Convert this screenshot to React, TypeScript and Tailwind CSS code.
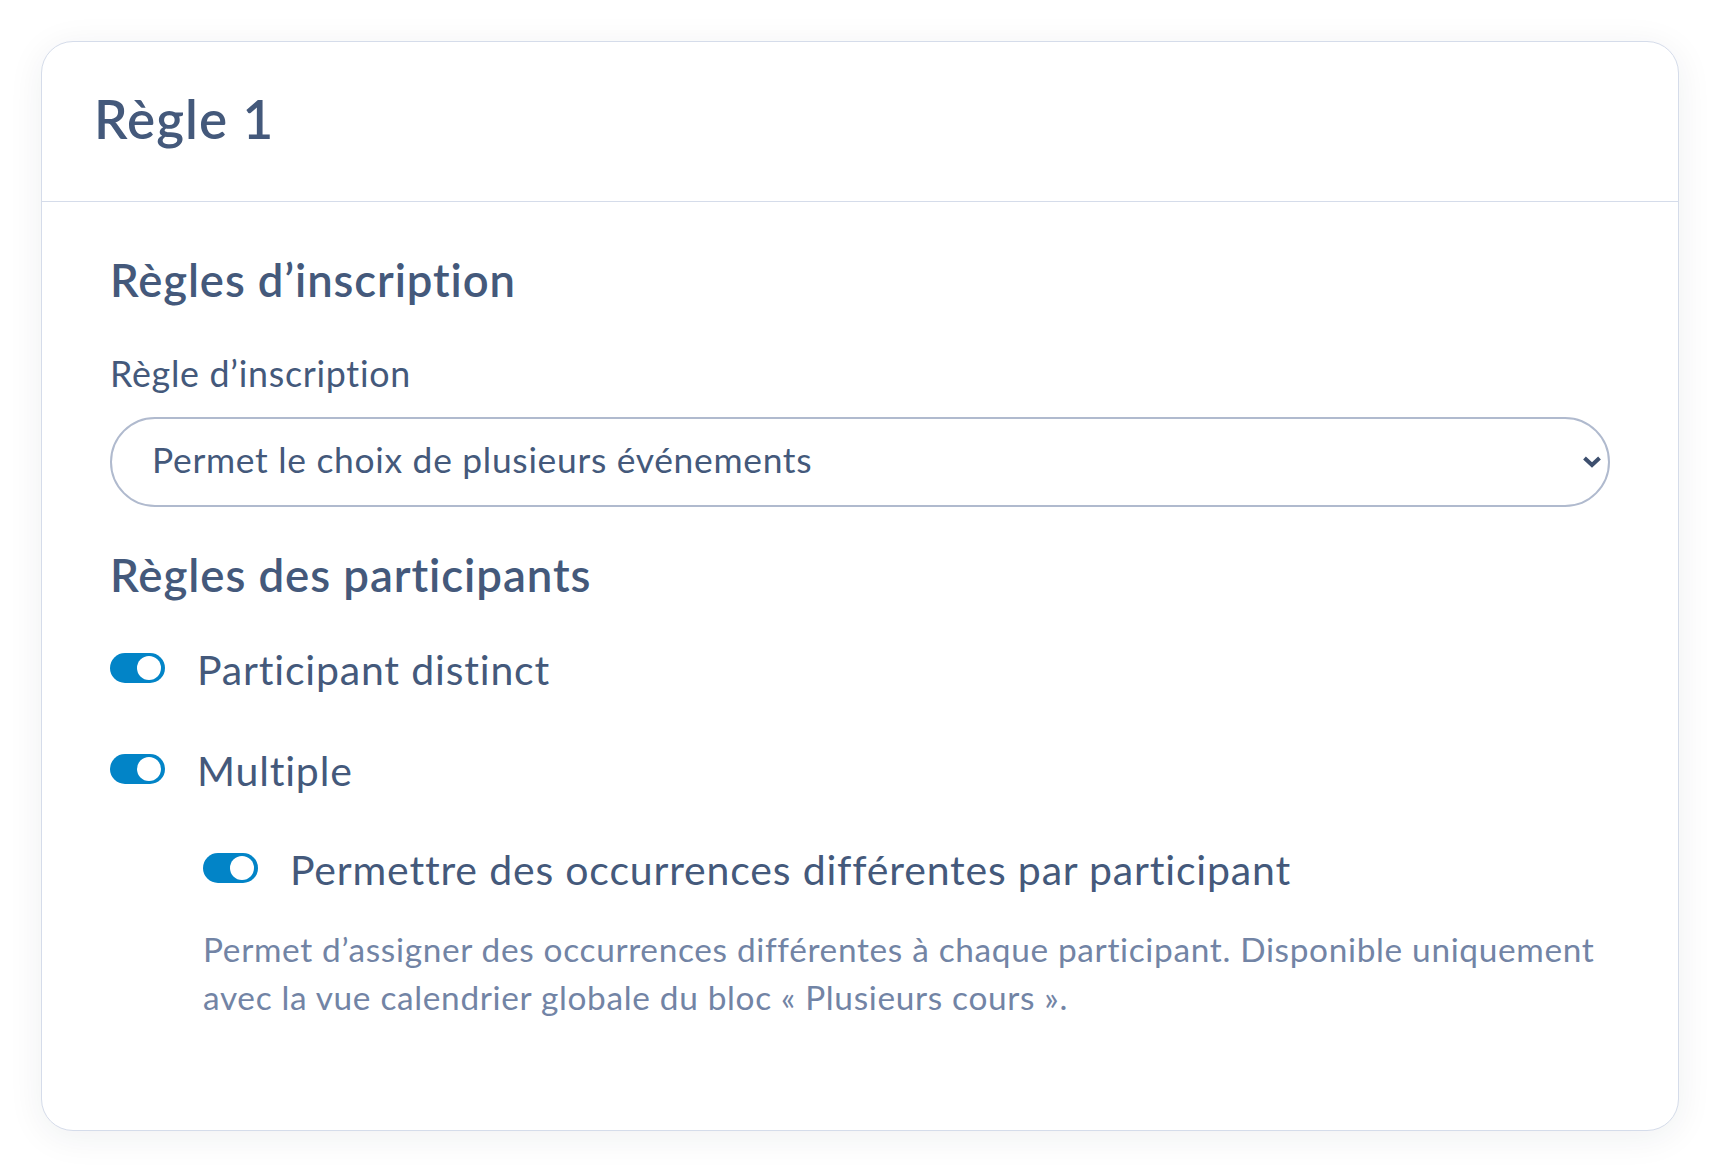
import React from "react";

function Toggle() {
  return (
    <span className="flex h-[30px] w-[55px] shrink-0 items-center justify-end rounded-full bg-[#0284c7] pr-[4px]">
      <span className="h-[24px] w-[24px] rounded-full bg-white" />
    </span>
  );
}

function ToggleRow({ label, className }: { label: string; className?: string }) {
  return (
    <div className={`flex items-center gap-[32px] ${className ?? ""}`}>
      <Toggle />
      <span className="mt-[3px] text-[41px] leading-none tracking-[0.02em] text-[#44597b]">{label}</span>
    </div>
  );
}

export default function App() {
  return (
    <div className="min-h-screen bg-white p-[41px] font-['Lato',sans-serif]">
      <div className="h-[1090px] overflow-hidden rounded-[32px] border border-[#d5dcea] bg-white shadow-[0_6px_36px_rgba(30,41,59,0.07)]">
        <div className="flex h-[160px] items-center border-b border-[#d5dcea] px-[52px] pb-[6px]">
          <h1 className="text-[53px] font-semibold leading-none tracking-[0.02em] text-[#44597b]">Règle 1</h1>
        </div>

        <div className="px-[68px]">
          <h2 className="mt-[55px] text-[45.4px] font-semibold leading-none tracking-[0.02em] text-[#44597b]">
            Règles d’inscription
          </h2>

          <p className="mt-[54px] text-[35.8px] leading-none tracking-[0.02em] text-[#44597b]">
            Règle d’inscription
          </p>

          <div className="mt-[25px] flex h-[90px] items-center justify-between rounded-full border-2 border-[#b0bace] pl-[40px] pr-[6px] pb-[6px]">
            <span className="text-[35.4px] leading-none tracking-[0.02em] text-[#44597b]">
              Permet le choix de plusieurs événements
            </span>
            <svg width="20" height="14" viewBox="0 0 20 14" className="mt-[6px]">
              <path d="M2.5 3 L10 10 L17.5 3" fill="none" stroke="#3d4f6e" strokeWidth="4" />
            </svg>
          </div>

          <h2 className="mt-[45px] text-[45.6px] font-semibold leading-none tracking-[0.02em] text-[#44597b]">
            Règles des participants
          </h2>

          <ToggleRow label="Participant distinct" className="mt-[48px]" />
          <ToggleRow label="Multiple" className="mt-[57px]" />

          <div className="pl-[93px]">
            <ToggleRow
              label="Permettre des occurrences différentes par participant"
              className="mt-[55px]"
            />
            <p className="mt-[35px] text-[33.4px] leading-[48.4px] tracking-[0.02em] text-[#7284a5]">
              Permet d’assigner des occurrences différentes à chaque participant. Disponible uniquement
              avec la vue calendrier globale du bloc « Plusieurs cours ».
            </p>
          </div>
        </div>
      </div>
    </div>
  );
}
